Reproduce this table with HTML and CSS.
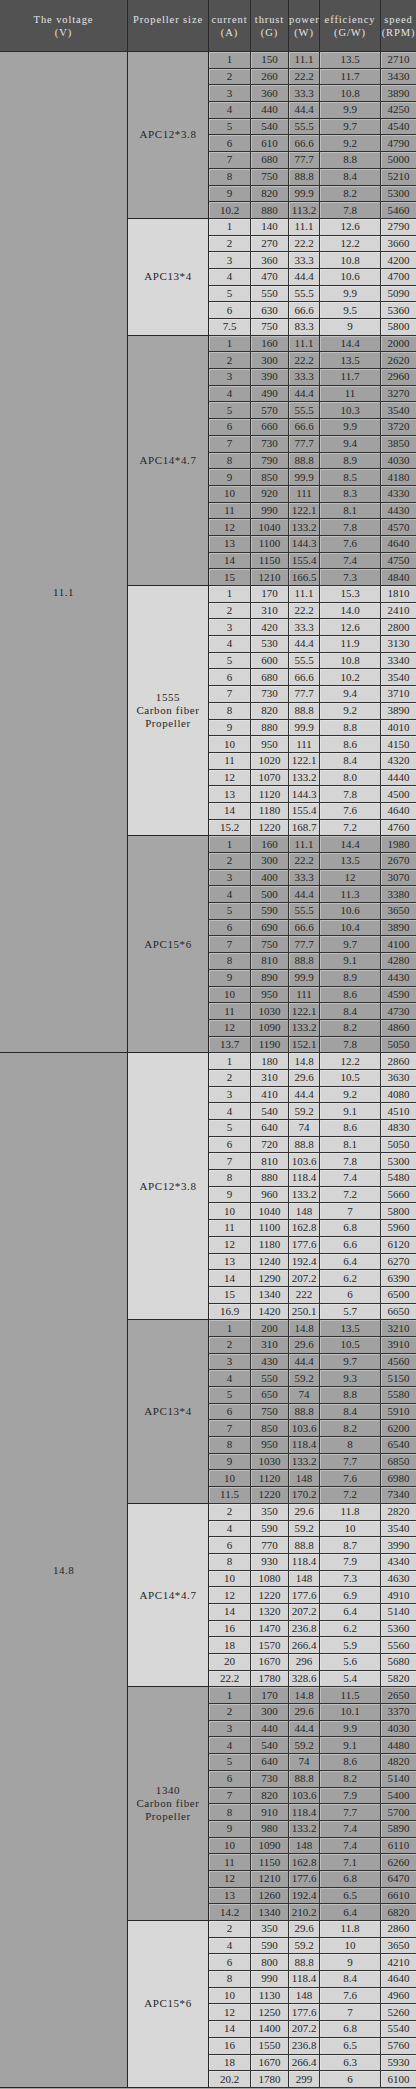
FILE: index.html
```html
<!DOCTYPE html>
<html>
<head>
<meta charset="utf-8">
<link rel="stylesheet" href="styles.css">
</head>
<body>
<table class="spec">
<colgroup>
<col class="c-volt"><col class="c-prop"><col class="c-cur"><col class="c-thr"><col class="c-pow"><col class="c-eff"><col class="c-spd">
</colgroup>
<thead>
<tr>
<th>The voltage<br>(V)</th>
<th>Propeller size<br>&nbsp;</th>
<th>current<br>(A)</th>
<th>thrust<br>(G)</th>
<th>power<br>(W)</th>
<th>efficiency<br>(G/W)</th>
<th class="last">speed<br>(RPM)</th>
</tr>
</thead>
<tbody>
<tr class="d"><td class="volt volt-first" rowspan="60">11.1</td><td class="prop prop-d" rowspan="10">APC12*3.8</td><td>1</td><td>150</td><td>11.1</td><td>13.5</td><td class="last">2710</td></tr>
<tr class="d"><td>2</td><td>260</td><td>22.2</td><td>11.7</td><td class="last">3430</td></tr>
<tr class="d"><td>3</td><td>360</td><td>33.3</td><td>10.8</td><td class="last">3890</td></tr>
<tr class="d"><td>4</td><td>440</td><td>44.4</td><td>9.9</td><td class="last">4250</td></tr>
<tr class="d"><td>5</td><td>540</td><td>55.5</td><td>9.7</td><td class="last">4540</td></tr>
<tr class="d"><td>6</td><td>610</td><td>66.6</td><td>9.2</td><td class="last">4790</td></tr>
<tr class="d"><td>7</td><td>680</td><td>77.7</td><td>8.8</td><td class="last">5000</td></tr>
<tr class="d"><td>8</td><td>750</td><td>88.8</td><td>8.4</td><td class="last">5210</td></tr>
<tr class="d"><td>9</td><td>820</td><td>99.9</td><td>8.2</td><td class="last">5300</td></tr>
<tr class="d"><td>10.2</td><td>880</td><td>113.2</td><td>7.8</td><td class="last">5460</td></tr>

<tr class="l"><td class="prop prop-l" rowspan="7">APC13*4</td><td>1</td><td>140</td><td>11.1</td><td>12.6</td><td class="last">2790</td></tr>
<tr class="l"><td>2</td><td>270</td><td>22.2</td><td>12.2</td><td class="last">3660</td></tr>
<tr class="l"><td>3</td><td>360</td><td>33.3</td><td>10.8</td><td class="last">4200</td></tr>
<tr class="l"><td>4</td><td>470</td><td>44.4</td><td>10.6</td><td class="last">4700</td></tr>
<tr class="l"><td>5</td><td>550</td><td>55.5</td><td>9.9</td><td class="last">5090</td></tr>
<tr class="l"><td>6</td><td>630</td><td>66.6</td><td>9.5</td><td class="last">5360</td></tr>
<tr class="l"><td>7.5</td><td>750</td><td>83.3</td><td>9</td><td class="last">5800</td></tr>

<tr class="d"><td class="prop prop-d" rowspan="15">APC14*4.7</td><td>1</td><td>160</td><td>11.1</td><td>14.4</td><td class="last">2000</td></tr>
<tr class="d"><td>2</td><td>300</td><td>22.2</td><td>13.5</td><td class="last">2620</td></tr>
<tr class="d"><td>3</td><td>390</td><td>33.3</td><td>11.7</td><td class="last">2960</td></tr>
<tr class="d"><td>4</td><td>490</td><td>44.4</td><td>11</td><td class="last">3270</td></tr>
<tr class="d"><td>5</td><td>570</td><td>55.5</td><td>10.3</td><td class="last">3540</td></tr>
<tr class="d"><td>6</td><td>660</td><td>66.6</td><td>9.9</td><td class="last">3720</td></tr>
<tr class="d"><td>7</td><td>730</td><td>77.7</td><td>9.4</td><td class="last">3850</td></tr>
<tr class="d"><td>8</td><td>790</td><td>88.8</td><td>8.9</td><td class="last">4030</td></tr>
<tr class="d"><td>9</td><td>850</td><td>99.9</td><td>8.5</td><td class="last">4180</td></tr>
<tr class="d"><td>10</td><td>920</td><td>111</td><td>8.3</td><td class="last">4330</td></tr>
<tr class="d"><td>11</td><td>990</td><td>122.1</td><td>8.1</td><td class="last">4430</td></tr>
<tr class="d"><td>12</td><td>1040</td><td>133.2</td><td>7.8</td><td class="last">4570</td></tr>
<tr class="d"><td>13</td><td>1100</td><td>144.3</td><td>7.6</td><td class="last">4640</td></tr>
<tr class="d"><td>14</td><td>1150</td><td>155.4</td><td>7.4</td><td class="last">4750</td></tr>
<tr class="d"><td>15</td><td>1210</td><td>166.5</td><td>7.3</td><td class="last">4840</td></tr>

<tr class="l"><td class="prop prop-l" rowspan="15">1555<br>Carbon fiber<br>Propeller</td><td>1</td><td>170</td><td>11.1</td><td>15.3</td><td class="last">1810</td></tr>
<tr class="l"><td>2</td><td>310</td><td>22.2</td><td>14.0</td><td class="last">2410</td></tr>
<tr class="l"><td>3</td><td>420</td><td>33.3</td><td>12.6</td><td class="last">2800</td></tr>
<tr class="l"><td>4</td><td>530</td><td>44.4</td><td>11.9</td><td class="last">3130</td></tr>
<tr class="l"><td>5</td><td>600</td><td>55.5</td><td>10.8</td><td class="last">3340</td></tr>
<tr class="l"><td>6</td><td>680</td><td>66.6</td><td>10.2</td><td class="last">3540</td></tr>
<tr class="l"><td>7</td><td>730</td><td>77.7</td><td>9.4</td><td class="last">3710</td></tr>
<tr class="l"><td>8</td><td>820</td><td>88.8</td><td>9.2</td><td class="last">3890</td></tr>
<tr class="l"><td>9</td><td>880</td><td>99.9</td><td>8.8</td><td class="last">4010</td></tr>
<tr class="l"><td>10</td><td>950</td><td>111</td><td>8.6</td><td class="last">4150</td></tr>
<tr class="l"><td>11</td><td>1020</td><td>122.1</td><td>8.4</td><td class="last">4320</td></tr>
<tr class="l"><td>12</td><td>1070</td><td>133.2</td><td>8.0</td><td class="last">4440</td></tr>
<tr class="l"><td>13</td><td>1120</td><td>144.3</td><td>7.8</td><td class="last">4500</td></tr>
<tr class="l"><td>14</td><td>1180</td><td>155.4</td><td>7.6</td><td class="last">4640</td></tr>
<tr class="l"><td>15.2</td><td>1220</td><td>168.7</td><td>7.2</td><td class="last">4760</td></tr>

<tr class="d"><td class="prop prop-d" rowspan="13">APC15*6</td><td>1</td><td>160</td><td>11.1</td><td>14.4</td><td class="last">1980</td></tr>
<tr class="d"><td>2</td><td>300</td><td>22.2</td><td>13.5</td><td class="last">2670</td></tr>
<tr class="d"><td>3</td><td>400</td><td>33.3</td><td>12</td><td class="last">3070</td></tr>
<tr class="d"><td>4</td><td>500</td><td>44.4</td><td>11.3</td><td class="last">3380</td></tr>
<tr class="d"><td>5</td><td>590</td><td>55.5</td><td>10.6</td><td class="last">3650</td></tr>
<tr class="d"><td>6</td><td>690</td><td>66.6</td><td>10.4</td><td class="last">3890</td></tr>
<tr class="d"><td>7</td><td>750</td><td>77.7</td><td>9.7</td><td class="last">4100</td></tr>
<tr class="d"><td>8</td><td>810</td><td>88.8</td><td>9.1</td><td class="last">4280</td></tr>
<tr class="d"><td>9</td><td>890</td><td>99.9</td><td>8.9</td><td class="last">4430</td></tr>
<tr class="d"><td>10</td><td>950</td><td>111</td><td>8.6</td><td class="last">4590</td></tr>
<tr class="d"><td>11</td><td>1030</td><td>122.1</td><td>8.4</td><td class="last">4730</td></tr>
<tr class="d"><td>12</td><td>1090</td><td>133.2</td><td>8.2</td><td class="last">4860</td></tr>
<tr class="d"><td>13.7</td><td>1190</td><td>152.1</td><td>7.8</td><td class="last">5050</td></tr>
</tbody>
<tbody>
<tr class="l"><td class="volt" rowspan="62">14.8</td><td class="prop prop-l" rowspan="16">APC12*3.8</td><td>1</td><td>180</td><td>14.8</td><td>12.2</td><td class="last">2860</td></tr>
<tr class="l"><td>2</td><td>310</td><td>29.6</td><td>10.5</td><td class="last">3630</td></tr>
<tr class="l"><td>3</td><td>410</td><td>44.4</td><td>9.2</td><td class="last">4080</td></tr>
<tr class="l"><td>4</td><td>540</td><td>59.2</td><td>9.1</td><td class="last">4510</td></tr>
<tr class="l"><td>5</td><td>640</td><td>74</td><td>8.6</td><td class="last">4830</td></tr>
<tr class="l"><td>6</td><td>720</td><td>88.8</td><td>8.1</td><td class="last">5050</td></tr>
<tr class="l"><td>7</td><td>810</td><td>103.6</td><td>7.8</td><td class="last">5300</td></tr>
<tr class="l"><td>8</td><td>880</td><td>118.4</td><td>7.4</td><td class="last">5480</td></tr>
<tr class="l"><td>9</td><td>960</td><td>133.2</td><td>7.2</td><td class="last">5660</td></tr>
<tr class="l"><td>10</td><td>1040</td><td>148</td><td>7</td><td class="last">5800</td></tr>
<tr class="l"><td>11</td><td>1100</td><td>162.8</td><td>6.8</td><td class="last">5960</td></tr>
<tr class="l"><td>12</td><td>1180</td><td>177.6</td><td>6.6</td><td class="last">6120</td></tr>
<tr class="l"><td>13</td><td>1240</td><td>192.4</td><td>6.4</td><td class="last">6270</td></tr>
<tr class="l"><td>14</td><td>1290</td><td>207.2</td><td>6.2</td><td class="last">6390</td></tr>
<tr class="l"><td>15</td><td>1340</td><td>222</td><td>6</td><td class="last">6500</td></tr>
<tr class="l"><td>16.9</td><td>1420</td><td>250.1</td><td>5.7</td><td class="last">6650</td></tr>

<tr class="d"><td class="prop prop-d" rowspan="11">APC13*4</td><td>1</td><td>200</td><td>14.8</td><td>13.5</td><td class="last">3210</td></tr>
<tr class="d"><td>2</td><td>310</td><td>29.6</td><td>10.5</td><td class="last">3910</td></tr>
<tr class="d"><td>3</td><td>430</td><td>44.4</td><td>9.7</td><td class="last">4560</td></tr>
<tr class="d"><td>4</td><td>550</td><td>59.2</td><td>9.3</td><td class="last">5150</td></tr>
<tr class="d"><td>5</td><td>650</td><td>74</td><td>8.8</td><td class="last">5580</td></tr>
<tr class="d"><td>6</td><td>750</td><td>88.8</td><td>8.4</td><td class="last">5910</td></tr>
<tr class="d"><td>7</td><td>850</td><td>103.6</td><td>8.2</td><td class="last">6200</td></tr>
<tr class="d"><td>8</td><td>950</td><td>118.4</td><td>8</td><td class="last">6540</td></tr>
<tr class="d"><td>9</td><td>1030</td><td>133.2</td><td>7.7</td><td class="last">6850</td></tr>
<tr class="d"><td>10</td><td>1120</td><td>148</td><td>7.6</td><td class="last">6980</td></tr>
<tr class="d"><td>11.5</td><td>1220</td><td>170.2</td><td>7.2</td><td class="last">7340</td></tr>

<tr class="l"><td class="prop prop-l" rowspan="11">APC14*4.7</td><td>2</td><td>350</td><td>29.6</td><td>11.8</td><td class="last">2820</td></tr>
<tr class="l"><td>4</td><td>590</td><td>59.2</td><td>10</td><td class="last">3540</td></tr>
<tr class="l"><td>6</td><td>770</td><td>88.8</td><td>8.7</td><td class="last">3990</td></tr>
<tr class="l"><td>8</td><td>930</td><td>118.4</td><td>7.9</td><td class="last">4340</td></tr>
<tr class="l"><td>10</td><td>1080</td><td>148</td><td>7.3</td><td class="last">4630</td></tr>
<tr class="l"><td>12</td><td>1220</td><td>177.6</td><td>6.9</td><td class="last">4910</td></tr>
<tr class="l"><td>14</td><td>1320</td><td>207.2</td><td>6.4</td><td class="last">5140</td></tr>
<tr class="l"><td>16</td><td>1470</td><td>236.8</td><td>6.2</td><td class="last">5360</td></tr>
<tr class="l"><td>18</td><td>1570</td><td>266.4</td><td>5.9</td><td class="last">5560</td></tr>
<tr class="l"><td>20</td><td>1670</td><td>296</td><td>5.6</td><td class="last">5680</td></tr>
<tr class="l"><td>22.2</td><td>1780</td><td>328.6</td><td>5.4</td><td class="last">5820</td></tr>

<tr class="d"><td class="prop prop-d" rowspan="14">1340<br>Carbon fiber<br>Propeller</td><td>1</td><td>170</td><td>14.8</td><td>11.5</td><td class="last">2650</td></tr>
<tr class="d"><td>2</td><td>300</td><td>29.6</td><td>10.1</td><td class="last">3370</td></tr>
<tr class="d"><td>3</td><td>440</td><td>44.4</td><td>9.9</td><td class="last">4030</td></tr>
<tr class="d"><td>4</td><td>540</td><td>59.2</td><td>9.1</td><td class="last">4480</td></tr>
<tr class="d"><td>5</td><td>640</td><td>74</td><td>8.6</td><td class="last">4820</td></tr>
<tr class="d"><td>6</td><td>730</td><td>88.8</td><td>8.2</td><td class="last">5140</td></tr>
<tr class="d"><td>7</td><td>820</td><td>103.6</td><td>7.9</td><td class="last">5400</td></tr>
<tr class="d"><td>8</td><td>910</td><td>118.4</td><td>7.7</td><td class="last">5700</td></tr>
<tr class="d"><td>9</td><td>980</td><td>133.2</td><td>7.4</td><td class="last">5890</td></tr>
<tr class="d"><td>10</td><td>1090</td><td>148</td><td>7.4</td><td class="last">6110</td></tr>
<tr class="d"><td>11</td><td>1150</td><td>162.8</td><td>7.1</td><td class="last">6260</td></tr>
<tr class="d"><td>12</td><td>1210</td><td>177.6</td><td>6.8</td><td class="last">6470</td></tr>
<tr class="d"><td>13</td><td>1260</td><td>192.4</td><td>6.5</td><td class="last">6610</td></tr>
<tr class="d"><td>14.2</td><td>1340</td><td>210.2</td><td>6.4</td><td class="last">6820</td></tr>

<tr class="l"><td class="prop prop-l" rowspan="10">APC15*6</td><td>2</td><td>350</td><td>29.6</td><td>11.8</td><td class="last">2860</td></tr>
<tr class="l"><td>4</td><td>590</td><td>59.2</td><td>10</td><td class="last">3650</td></tr>
<tr class="l"><td>6</td><td>800</td><td>88.8</td><td>9</td><td class="last">4210</td></tr>
<tr class="l"><td>8</td><td>990</td><td>118.4</td><td>8.4</td><td class="last">4640</td></tr>
<tr class="l"><td>10</td><td>1130</td><td>148</td><td>7.6</td><td class="last">4960</td></tr>
<tr class="l"><td>12</td><td>1250</td><td>177.6</td><td>7</td><td class="last">5260</td></tr>
<tr class="l"><td>14</td><td>1400</td><td>207.2</td><td>6.8</td><td class="last">5540</td></tr>
<tr class="l"><td>16</td><td>1550</td><td>236.8</td><td>6.5</td><td class="last">5760</td></tr>
<tr class="l"><td>18</td><td>1670</td><td>266.4</td><td>6.3</td><td class="last">5930</td></tr>
<tr class="l"><td>20.2</td><td>1780</td><td>299</td><td>6</td><td class="last">6100</td></tr>
</tbody>
</table>
</body>
</html>
```

FILE: styles.css
```css
html, body {
  margin: 0;
  padding: 0;
  background: #a3a3a3;
  overflow: hidden;
}

.spec {
  width: 416px;
  table-layout: fixed;
  border-collapse: separate;
  border-spacing: 0;
  font-family: "Liberation Serif", "Times New Roman", serif;
  font-size: 11px;
  color: #262626;
}

.c-volt { width: 128px; }
.c-prop { width: 81px; }
.c-cur { width: 42px; }
.c-thr { width: 38px; }
.c-pow { width: 31px; }
.c-eff { width: 61px; }
.c-spd { width: 35px; }

.spec th {
  height: 52px;
  padding: 0;
  background: #525252;
  color: #e4e4e4;
  font-weight: normal;
  font-size: 10.5px;
  letter-spacing: 0.9px;
  line-height: 13px;
  text-align: center;
  vertical-align: middle;
  white-space: nowrap;
  border-right: 1px solid #2b2b2b;
  border-bottom: 1px solid #2b2b2b;
  box-sizing: border-box;
}

.spec tbody tr {
  height: 16.7px;
}

.spec td {
  padding: 0;
  line-height: 13px;
  text-align: center;
  vertical-align: middle;
  white-space: nowrap;
  border-right: 1px solid #303030;
  border-bottom: 1px solid #303030;
  box-shadow: inset 1px 1px 0 rgba(255, 255, 255, 0.32);
}

.spec .last {
  border-right: none;
}

.d td {
  background: #a1a1a1;
}

.l td {
  background: #d5d5d5;
}

.spec td.prop {
  letter-spacing: 0.6px;
  box-shadow: none;
  border-right: 1px solid #262626;
  border-bottom: 1px solid #262626;
}

.spec td.prop-d {
  background: #a6a6a6;
}

.spec td.prop-l {
  background: #d8d8d8;
}

.spec td.volt {
  background: #a3a3a3;
  box-shadow: none;
  letter-spacing: 0.5px;
  border-right: 1px solid #262626;
  border-bottom: 1px solid #262626;
}

.spec td.volt-first {
  padding-top: 80px;
}
```
